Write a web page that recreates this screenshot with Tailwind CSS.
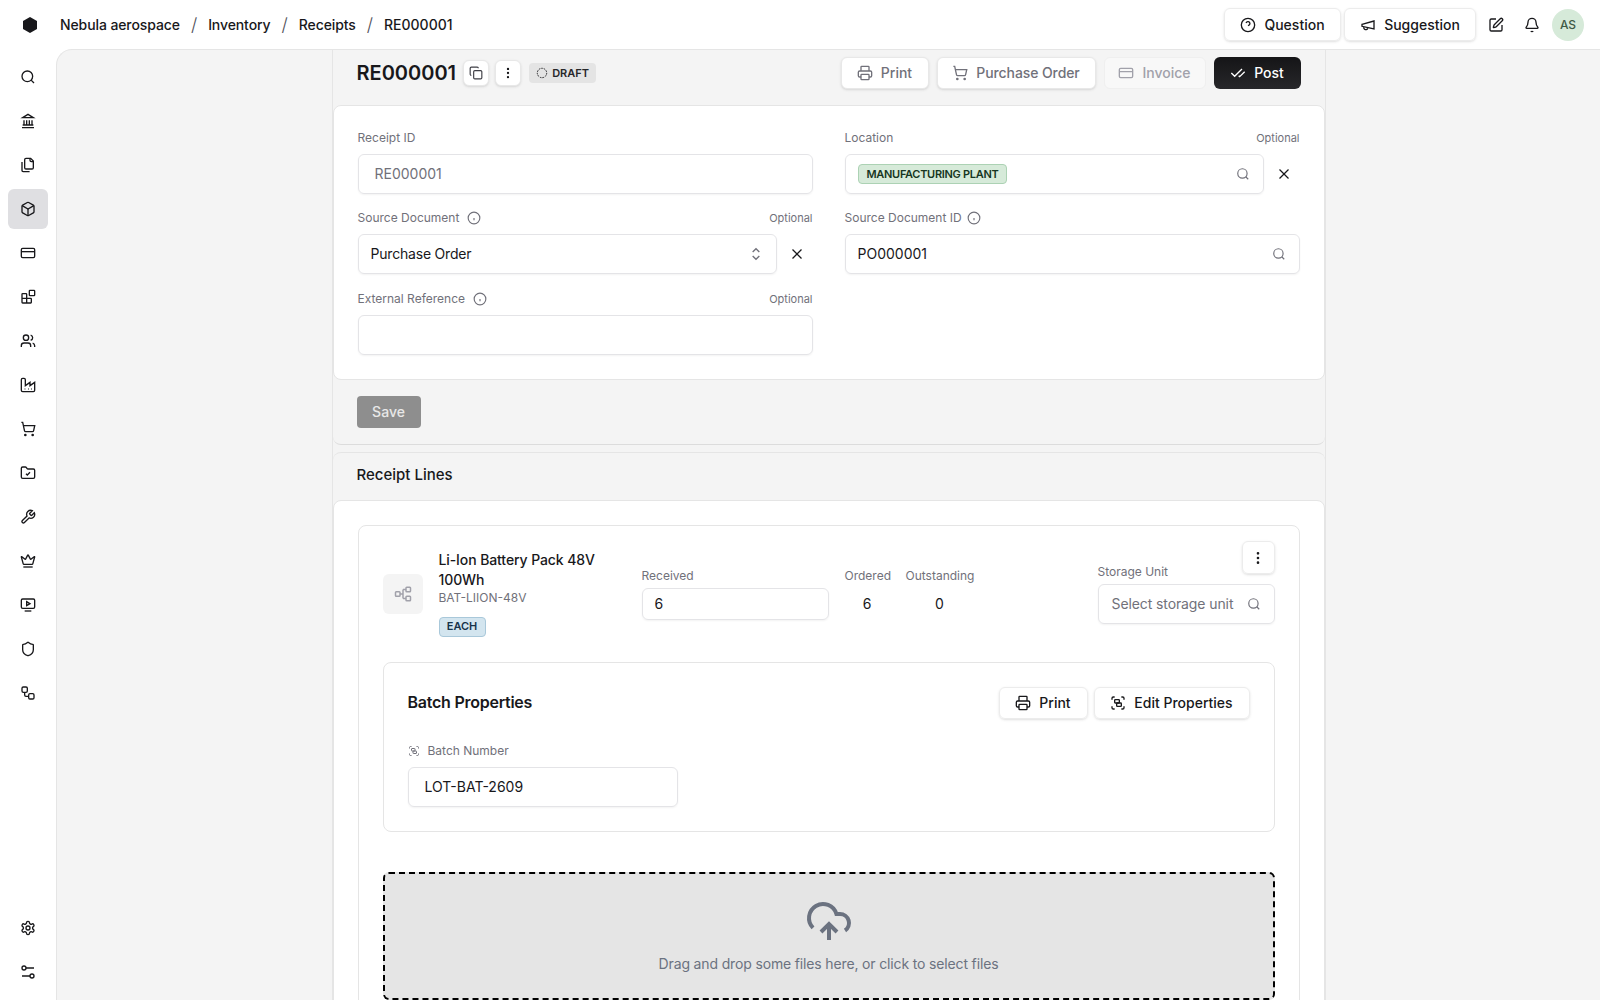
<!DOCTYPE html>
<html lang="en">
<head>
    <meta charset="UTF-8">
    <meta name="viewport" content="width=device-width, initial-scale=1.0">
    <title>RE000001</title>
    <script src="https://cdn.jsdelivr.net/npm/@tailwindcss/browser@4"></script>
</head>
<body class="h-screen overflow-hidden bg-white text-[#18181b] font-['Inter',sans-serif] flex flex-col">

<!-- icon set -->
<svg class="hidden">
    <symbol id="search" viewBox="0 0 24 24"><circle cx="11" cy="11" r="8"/><path d="m21 21-4.3-4.3"/></symbol>
    <symbol id="landmark" viewBox="0 0 24 24"><path d="M3 22h18M6 18v-7M10 18v-7M14 18v-7M18 18v-7M4 18h16"/><polygon points="12 2 20 7 4 7"/></symbol>
    <symbol id="files" viewBox="0 0 24 24"><path d="M20 7h-3a2 2 0 0 1-2-2V2"/><path d="M9 18a2 2 0 0 1-2-2V4a2 2 0 0 1 2-2h7l4 4v10a2 2 0 0 1-2 2Z"/><path d="M3 7.6v12.8A1.6 1.6 0 0 0 4.6 22h9.8"/></symbol>
    <symbol id="box" viewBox="0 0 24 24"><path d="M21 8a2 2 0 0 0-1-1.73l-7-4a2 2 0 0 0-2 0l-7 4A2 2 0 0 0 3 8v8a2 2 0 0 0 1 1.73l7 4a2 2 0 0 0 2 0l7-4A2 2 0 0 0 21 16Z"/><path d="m3.3 7 8.7 5 8.7-5"/><path d="M12 22V12"/></symbol>
    <symbol id="card" viewBox="0 0 24 24"><rect width="20" height="14" x="2" y="5" rx="2"/><path d="M2 10h20"/></symbol>
    <symbol id="blocks" viewBox="0 0 24 24"><rect width="8" height="8" x="14" y="2" rx="1"/><path d="M10 21V8a1 1 0 0 0-1-1H4a1 1 0 0 0-1 1v12a1 1 0 0 0 1 1h12a1 1 0 0 0 1-1v-5a1 1 0 0 0-1-1H3"/></symbol>
    <symbol id="users" viewBox="0 0 24 24"><path d="M16 21v-2a4 4 0 0 0-4-4H6a4 4 0 0 0-4 4v2"/><circle cx="9" cy="7" r="4"/><path d="M22 21v-2a4 4 0 0 0-3-3.87"/><path d="M16 3.13a4 4 0 0 1 0 7.75"/></symbol>
    <symbol id="factory" viewBox="0 0 24 24"><path d="M2 20a2 2 0 0 0 2 2h16a2 2 0 0 0 2-2V8l-7 5V8l-7 5V4a2 2 0 0 0-2-2H4a2 2 0 0 0-2 2Z"/><path d="M17 18h1M12 18h1M7 18h1"/></symbol>
    <symbol id="cart" viewBox="0 0 24 24"><circle cx="8" cy="21" r="1"/><circle cx="19" cy="21" r="1"/><path d="M2.05 2.05h2l2.66 12.42a2 2 0 0 0 2 1.58h9.78a2 2 0 0 0 1.95-1.57l1.65-7.43H5.12"/></symbol>
    <symbol id="folder" viewBox="0 0 24 24"><path d="M20 20a2 2 0 0 0 2-2V8a2 2 0 0 0-2-2h-7.9a2 2 0 0 1-1.69-.9L9.6 3.9A2 2 0 0 0 7.93 3H4a2 2 0 0 0-2 2v13a2 2 0 0 0 2 2Z"/><path d="m9 13 2 2 4-4"/></symbol>
    <symbol id="wrench" viewBox="0 0 24 24"><path d="M14.7 6.3a1 1 0 0 0 0 1.4l1.6 1.6a1 1 0 0 0 1.4 0l3.77-3.77a6 6 0 0 1-7.94 7.94l-6.91 6.91a2.12 2.12 0 0 1-3-3l6.91-6.91a6 6 0 0 1 7.94-7.94l-3.76 3.76z"/></symbol>
    <symbol id="crown" viewBox="0 0 24 24"><path d="M11.562 3.266a.5.5 0 0 1 .876 0L15.39 8.87a1 1 0 0 0 1.516.294L21.183 5.5a.5.5 0 0 1 .798.519l-2.834 10.246a1 1 0 0 1-.956.734H5.81a1 1 0 0 1-.957-.734L2.02 6.02a.5.5 0 0 1 .798-.519l4.276 3.664a1 1 0 0 0 1.516-.294z"/><path d="M5 21h14"/></symbol>
    <symbol id="screen" viewBox="0 0 24 24"><rect width="20" height="14" x="2" y="3" rx="2"/><path d="M7 21h10"/><polygon points="10 7 15 10 10 13"/></symbol>
    <symbol id="shield" viewBox="0 0 24 24"><path d="M20 13c0 5-3.5 7.5-7.66 8.95a1 1 0 0 1-.67-.01C7.5 20.5 4 18 4 13V6a1 1 0 0 1 1-1c2 0 4.5-1.2 6.24-2.72a1.17 1.17 0 0 1 1.52 0C14.51 3.81 17 5 19 5a1 1 0 0 1 1 1z"/></symbol>
    <symbol id="flow" viewBox="0 0 24 24"><rect width="8" height="8" x="3" y="3" rx="2"/><path d="M7 11v4a2 2 0 0 0 2 2h4"/><rect width="8" height="8" x="13" y="13" rx="2"/></symbol>
    <symbol id="settings" viewBox="0 0 24 24"><path d="M12.22 2h-.44a2 2 0 0 0-2 2v.18a2 2 0 0 1-1 1.73l-.43.25a2 2 0 0 1-2 0l-.15-.08a2 2 0 0 0-2.73.73l-.22.38a2 2 0 0 0 .73 2.73l.15.1a2 2 0 0 1 1 1.72v.51a2 2 0 0 1-1 1.74l-.15.09a2 2 0 0 0-.73 2.73l.22.38a2 2 0 0 0 2.73.73l.15-.08a2 2 0 0 1 2 0l.43.25a2 2 0 0 1 1 1.73V20a2 2 0 0 0 2 2h.44a2 2 0 0 0 2-2v-.18a2 2 0 0 1 1-1.73l.43-.25a2 2 0 0 1 2 0l.15.08a2 2 0 0 0 2.73-.73l.22-.39a2 2 0 0 0-.73-2.73l-.15-.08a2 2 0 0 1-1-1.74v-.5a2 2 0 0 1 1-1.74l.15-.09a2 2 0 0 0 .73-2.73l-.22-.38a2 2 0 0 0-2.73-.73l-.15.08a2 2 0 0 1-2 0l-.43-.25a2 2 0 0 1-1-1.73V4a2 2 0 0 0-2-2z"/><circle cx="12" cy="12" r="3"/></symbol>
    <symbol id="sliders" viewBox="0 0 24 24"><circle cx="6" cy="6" r="3"/><path d="M9 6h12M3 18h12"/><circle cx="18" cy="18" r="3"/></symbol>
    <symbol id="question" viewBox="0 0 24 24"><circle cx="12" cy="12" r="10"/><path d="M9.09 9a3 3 0 0 1 5.83 1c0 2-3 3-3 3"/><path d="M12 17h.01"/></symbol>
    <symbol id="megaphone" viewBox="0 0 24 24"><path d="m3 11 18-5v12L3 14v-3z"/><path d="M11.6 16.8a3 3 0 1 1-5.8-1.6"/></symbol>
    <symbol id="edit" viewBox="0 0 24 24"><path d="M12 3H5a2 2 0 0 0-2 2v14a2 2 0 0 0 2 2h14a2 2 0 0 0 2-2v-7"/><path d="M18.375 2.625a1 1 0 0 1 3 3l-9.013 9.014a2 2 0 0 1-.853.505l-2.873.84a.5.5 0 0 1-.62-.62l.84-2.873a2 2 0 0 1 .506-.852z"/></symbol>
    <symbol id="bell" viewBox="0 0 24 24"><path d="M10.268 21a2 2 0 0 0 3.464 0"/><path d="M3.262 15.326A1 1 0 0 0 4 17h16a1 1 0 0 0 .74-1.673C19.41 13.956 18 12.499 18 8A6 6 0 0 0 6 8c0 4.499-1.411 5.956-2.738 7.326"/></symbol>
    <symbol id="copy" viewBox="0 0 24 24"><rect width="14" height="14" x="8" y="8" rx="2"/><path d="M4 16c-1.1 0-2-.9-2-2V4c0-1.1.9-2 2-2h10c1.1 0 2 .9 2 2"/></symbol>
    <symbol id="dots" viewBox="0 0 24 24"><circle cx="12" cy="5" r="1"/><circle cx="12" cy="12" r="1"/><circle cx="12" cy="19" r="1"/></symbol>
    <symbol id="printer" viewBox="0 0 24 24"><path d="M6 18H4a2 2 0 0 1-2-2v-5a2 2 0 0 1 2-2h16a2 2 0 0 1 2 2v5a2 2 0 0 1-2 2h-2"/><path d="M6 9V3a1 1 0 0 1 1-1h10a1 1 0 0 1 1 1v6"/><rect width="12" height="8" x="6" y="14" rx="1"/></symbol>
    <symbol id="checks" viewBox="0 0 24 24"><path d="M18 6 7 17l-5-5"/><path d="m22 10-7.5 7.5L13 16"/></symbol>
    <symbol id="info" viewBox="0 0 24 24"><circle cx="12" cy="12" r="10"/><path d="M12 16v-4"/><path d="M12 8h.01"/></symbol>
    <symbol id="x" viewBox="0 0 24 24"><path d="M18 6 6 18"/><path d="m6 6 12 12"/></symbol>
    <symbol id="updown" viewBox="0 0 24 24"><path d="m7 15 5 5 5-5"/><path d="m7 9 5-5 5 5"/></symbol>
    <symbol id="group" viewBox="0 0 24 24"><path d="M3 7V5c0-1.1.9-2 2-2h2"/><path d="M17 3h2c1.1 0 2 .9 2 2v2"/><path d="M21 17v2c0 1.1-.9 2-2 2h-2"/><path d="M7 21H5c-1.1 0-2-.9-2-2v-2"/><rect width="7" height="5" x="7" y="7" rx="1"/><rect width="7" height="5" x="10" y="12" rx="1"/></symbol>
    <symbol id="network" viewBox="0 0 24 24"><rect width="6" height="6" x="2" y="9" rx="1"/><rect width="6" height="6" x="16" y="3" rx="1"/><rect width="6" height="6" x="16" y="15" rx="1"/><path d="M8 12h4M12 6v12M12 6h4M12 18h4"/></symbol>
    <symbol id="upload" viewBox="0 0 24 24"><path d="M12 13v8"/><path d="M4 14.899A7 7 0 1 1 15.71 8h1.79a4.5 4.5 0 0 1 2.5 8.242"/><path d="m8 17 4-4 4 4"/></symbol>
</svg>

<!-- top bar -->
<header class="h-[49px] shrink-0 flex items-center pl-[22px] pr-4 text-sm">
    <svg class="w-4 h-4 shrink-0 fill-[#18181b]" viewBox="0 0 16 16"><polygon points="8 0 15 4 15 12 8 16 1 12 1 4"/></svg>
    <nav class="ml-[22px] flex items-center font-medium">
        <span class="tracking-[-0.1px]">Nebula aerospace</span>
        <span class="mx-[11px] text-lg leading-5 font-light text-[#52525b]">/</span>
        <span class="tracking-[-0.1px]">Inventory</span>
        <span class="mx-[11px] text-lg leading-5 font-light text-[#52525b]">/</span>
        <span class="tracking-[-0.1px]">Receipts</span>
        <span class="mx-[11px] text-lg leading-5 font-light text-[#52525b]">/</span>
        <span>RE000001</span>
    </nav>
    <div class="ml-auto flex items-center">
        <button class="h-[33px] w-[117px] flex items-center justify-center gap-2 rounded-md border border-[#ececec] shadow-sm font-medium">
            <svg class="w-4 h-4 fill-none stroke-current stroke-2"><use href="#question"/></svg>Question
        </button>
        <button class="ml-[3px] h-[33px] w-[132px] flex items-center justify-center gap-2 rounded-md border border-[#ececec] shadow-sm font-medium">
            <svg class="w-4 h-4 fill-none stroke-current stroke-2"><use href="#megaphone"/></svg>Suggestion
        </button>
        <svg class="ml-3 w-4 h-4 fill-none stroke-current stroke-2"><use href="#edit"/></svg>
        <svg class="ml-5 w-4 h-4 fill-none stroke-current stroke-2"><use href="#bell"/></svg>
        <div class="ml-3 w-8 h-8 rounded-full bg-[#d6ead9] flex items-center justify-center text-xs font-medium text-[#3f5a47]">AS</div>
    </div>
</header>

<div class="flex-1 flex min-h-0">
    <!-- sidebar -->
    <aside class="w-14 shrink-0 flex flex-col items-center gap-1 pt-2 pb-2">
        <a class="w-10 h-10 rounded flex items-center justify-center"><svg class="w-4 h-4 fill-none stroke-current stroke-2"><use href="#search"/></svg></a>
        <a class="w-10 h-10 rounded flex items-center justify-center"><svg class="w-4 h-4 fill-none stroke-current stroke-2"><use href="#landmark"/></svg></a>
        <a class="w-10 h-10 rounded flex items-center justify-center"><svg class="w-4 h-4 fill-none stroke-current stroke-2"><use href="#files"/></svg></a>
        <a class="w-10 h-10 rounded-md bg-[#dfdfe2] flex items-center justify-center"><svg class="w-4 h-4 fill-none stroke-current stroke-2"><use href="#box"/></svg></a>
        <a class="w-10 h-10 rounded flex items-center justify-center"><svg class="w-4 h-4 fill-none stroke-current stroke-2"><use href="#card"/></svg></a>
        <a class="w-10 h-10 rounded flex items-center justify-center"><svg class="w-4 h-4 fill-none stroke-current stroke-2"><use href="#blocks"/></svg></a>
        <a class="w-10 h-10 rounded flex items-center justify-center"><svg class="w-4 h-4 fill-none stroke-current stroke-2"><use href="#users"/></svg></a>
        <a class="w-10 h-10 rounded flex items-center justify-center"><svg class="w-4 h-4 fill-none stroke-current stroke-2"><use href="#factory"/></svg></a>
        <a class="w-10 h-10 rounded flex items-center justify-center"><svg class="w-4 h-4 fill-none stroke-current stroke-2"><use href="#cart"/></svg></a>
        <a class="w-10 h-10 rounded flex items-center justify-center"><svg class="w-4 h-4 fill-none stroke-current stroke-2"><use href="#folder"/></svg></a>
        <a class="w-10 h-10 rounded flex items-center justify-center"><svg class="w-4 h-4 fill-none stroke-current stroke-2"><use href="#wrench"/></svg></a>
        <a class="w-10 h-10 rounded flex items-center justify-center"><svg class="w-4 h-4 fill-none stroke-current stroke-2"><use href="#crown"/></svg></a>
        <a class="w-10 h-10 rounded flex items-center justify-center"><svg class="w-4 h-4 fill-none stroke-current stroke-2"><use href="#screen"/></svg></a>
        <a class="w-10 h-10 rounded flex items-center justify-center"><svg class="w-4 h-4 fill-none stroke-current stroke-2"><use href="#shield"/></svg></a>
        <a class="w-10 h-10 rounded flex items-center justify-center"><svg class="w-4 h-4 fill-none stroke-current stroke-2"><use href="#flow"/></svg></a>
        <a class="mt-auto w-10 h-10 rounded flex items-center justify-center"><svg class="w-4 h-4 fill-none stroke-current stroke-2"><use href="#settings"/></svg></a>
        <a class="w-10 h-10 rounded flex items-center justify-center"><svg class="w-4 h-4 fill-none stroke-current stroke-2"><use href="#sliders"/></svg></a>
    </aside>

    <!-- content -->
    <main class="flex-1 min-w-0 bg-[#f4f4f4] border-l border-t border-[#e5e5e5] rounded-tl-2xl overflow-hidden flex justify-center">
        <div class="w-[994px] shrink-0 border-x border-[#e5e5e5]">
            <!-- title row -->
            <div class="h-[55px] pl-6 pr-6 pb-[9px] flex items-center">
                <h1 class="text-xl font-semibold">RE000001</h1>
                <button class="ml-[7px] w-[26px] h-[26px] bg-white rounded-md border border-[#e8e8e8] shadow-sm flex items-center justify-center">
                    <svg class="w-[14px] h-[14px] fill-none stroke-[#3f3f46] stroke-2"><use href="#copy"/></svg>
                </button>
                <button class="ml-[6px] w-[26px] h-[26px] bg-white rounded-md border border-[#e8e8e8] shadow-sm flex items-center justify-center">
                    <svg class="w-[14px] h-[14px] fill-none stroke-current stroke-2"><use href="#dots"/></svg>
                </button>
                <span class="ml-2 h-[20px] w-[67px] rounded bg-[#e4e4e4] flex items-center justify-center gap-1 text-[11px] font-semibold text-[#27272a]">
                    <svg class="w-3 h-3 fill-none stroke-current stroke-2"><circle cx="6" cy="6" r="4.7" stroke-width="1" stroke-dasharray="1.6 1"/></svg>DRAFT
                </span>
                <div class="ml-auto flex items-center gap-2 text-sm font-medium">
                    <button class="h-8 w-[88px] bg-white rounded-md border border-[#e8e8e8] shadow-sm flex items-center justify-center gap-2 text-[#71717a]">
                        <svg class="w-4 h-4 fill-none stroke-current stroke-2"><use href="#printer"/></svg>Print
                    </button>
                    <button class="h-8 w-[159px] bg-white rounded-md border border-[#e8e8e8] shadow-sm flex items-center justify-center gap-2 text-[#71717a] tracking-[-0.1px]">
                        <svg class="w-4 h-4 fill-none stroke-current stroke-2"><use href="#cart"/></svg>Purchase Order
                    </button>
                    <button class="h-8 w-[102px] bg-[#f8f8f8] rounded-md border border-[#efefef] flex items-center justify-center gap-2 text-[#a1a1aa]">
                        <svg class="w-4 h-4 fill-none stroke-current stroke-2"><use href="#card"/></svg>Invoice
                    </button>
                    <button class="h-8 w-[87px] bg-gradient-to-b from-[#151517] to-[#27272a] rounded-md flex items-center justify-center gap-2 text-white">
                        <svg class="w-4 h-4 fill-none stroke-current stroke-2"><use href="#checks"/></svg>Post
                    </button>
                </div>
            </div>

            <!-- receipt form -->
            <div class="border-b border-[#dcdcdc] rounded-b-lg">
                <div class="bg-white border border-[#e5e5e5] rounded-lg px-6 pt-6 pb-6 grid grid-cols-2 gap-x-8 gap-y-4">
                    <div>
                        <div class="h-4 mb-2 flex items-center text-xs text-[#71717a]">Receipt ID</div>
                        <div class="h-10 rounded-md border border-[#e4e4e7] shadow-xs pl-4 flex items-center text-sm text-[#71717a]">RE000001</div>
                    </div>
                    <div>
                        <div class="h-4 mb-2 flex items-center justify-between text-xs text-[#71717a]"><span>Location</span><span class="text-[11px]">Optional</span></div>
                        <div class="flex items-center">
                            <div class="flex-1 h-10 rounded-md border border-[#e4e4e7] shadow-xs pl-3 pr-[13px] flex items-center justify-between">
                                <span class="h-5 px-2 rounded border border-[#acd2b4] bg-[#d6ead9] flex items-center text-[11px] font-semibold tracking-[-0.3px] text-[#173622]">MANUFACTURING PLANT</span>
                                <svg class="w-[14px] h-[14px] fill-none stroke-[#71717a] stroke-2"><use href="#search"/></svg>
                            </div>
                            <button class="w-9 h-9 pl-1 flex items-center justify-center"><svg class="w-[18px] h-[18px] fill-none stroke-current stroke-[1.7]"><use href="#x"/></svg></button>
                        </div>
                    </div>
                    <div>
                        <div class="h-4 mb-2 flex items-center justify-between text-xs text-[#71717a]">
                            <span class="flex items-center gap-2">Source Document <svg class="w-[14px] h-[14px] fill-none stroke-current stroke-2"><use href="#info"/></svg></span>
                            <span class="text-[11px]">Optional</span>
                        </div>
                        <div class="flex items-center">
                            <div class="flex-1 h-10 rounded-md border border-[#e4e4e7] shadow-xs pl-3 pr-3 flex items-center justify-between text-sm">
                                <span class="tracking-[-0.2px]">Purchase Order</span>
                                <svg class="w-4 h-4 fill-none stroke-[#71717a] stroke-2"><use href="#updown"/></svg>
                            </div>
                            <button class="w-9 h-9 pl-1 flex items-center justify-center"><svg class="w-[18px] h-[18px] fill-none stroke-current stroke-[1.7]"><use href="#x"/></svg></button>
                        </div>
                    </div>
                    <div>
                        <div class="h-4 mb-2 flex items-center gap-[5px] text-xs text-[#71717a]">Source Document ID <svg class="w-[14px] h-[14px] fill-none stroke-current stroke-2"><use href="#info"/></svg></div>
                        <div class="h-10 rounded-md border border-[#e4e4e7] shadow-xs pl-3 pr-[13px] flex items-center justify-between text-sm">
                            <span>PO000001</span>
                            <svg class="w-[14px] h-[14px] fill-none stroke-[#71717a] stroke-2"><use href="#search"/></svg>
                        </div>
                    </div>
                    <div class="mt-px">
                        <div class="h-4 mb-2 flex items-center justify-between text-xs text-[#71717a]">
                            <span class="flex items-center gap-2">External Reference <svg class="w-[14px] h-[14px] fill-none stroke-current stroke-2"><use href="#info"/></svg></span>
                            <span class="text-[11px]">Optional</span>
                        </div>
                        <div class="h-10 rounded-md border border-[#e4e4e7] shadow-xs"></div>
                    </div>
                </div>
                <div class="h-[64px] pl-6 pt-4">
                    <button class="h-8 w-16 rounded bg-[#8e8e8e] text-sm font-medium text-white/80">Save</button>
                </div>
            </div>

            <!-- receipt lines -->
            <div class="mt-[7px] border-t border-[#e5e5e5] rounded-t-lg">
                <div class="h-[47px] pl-6 pb-[3px] flex items-center text-[15px] font-medium">Receipt Lines</div>
                <div class="bg-white border border-[#e5e5e5] rounded-lg p-6 pb-10">
                    <div class="relative border border-[#e5e5e5] rounded-lg p-6">
                        <button class="absolute top-[15px] right-6 w-[33px] h-[33px] rounded-md border border-[#ececec] shadow-sm flex items-center justify-center">
                            <svg class="w-4 h-4 fill-none stroke-current stroke-2"><use href="#dots"/></svg>
                        </button>

                        <div class="h-[88px] flex items-center">
                            <div class="w-10 h-10 rounded-md bg-[#f4f4f4] flex items-center justify-center">
                                <svg class="w-[18px] h-[18px] fill-none stroke-[#a1a1aa] stroke-2"><use href="#network"/></svg>
                            </div>
                            <div class="ml-4 w-[203px] shrink-0 pb-[2px]">
                                <div class="w-[185px] text-sm leading-5 font-medium tracking-[-0.1px]">Li-Ion Battery Pack 48V 100Wh</div>
                                <div class="text-xs leading-4 text-[#71717a]">BAT-LIION-48V</div>
                                <span class="mt-[11px] h-5 w-[47px] rounded border border-[#a9c8da] bg-[#d3e5ef] flex items-center justify-center text-[11px] font-semibold text-[#17324a]">EACH</span>
                            </div>
                            <div class="w-[187px] shrink-0">
                                <div class="h-4 mb-1 text-xs leading-4 text-[#71717a]">Received</div>
                                <div class="h-8 rounded-md border border-[#e4e4e7] shadow-xs pl-3 flex items-center text-sm">6</div>
                            </div>
                            <div class="ml-4 w-[45px] shrink-0 text-center">
                                <div class="h-4 mb-1 text-xs leading-4 text-[#71717a]">Ordered</div>
                                <div class="h-8 flex items-center justify-center text-sm">6</div>
                            </div>
                            <div class="ml-4 w-[68px] shrink-0 text-center">
                                <div class="h-4 mb-1 text-xs leading-4 text-[#71717a]">Outstanding</div>
                                <div class="h-8 flex items-center justify-center text-sm">0</div>
                            </div>
                            <div class="ml-auto w-[177px] shrink-0">
                                <div class="h-4 mb-1 text-xs leading-4 text-[#71717a]">Storage Unit</div>
                                <div class="h-10 rounded-md border border-[#e4e4e7] shadow-xs pl-[13px] pr-[13px] flex items-center justify-between text-sm text-[#71717a] tracking-[-0.1px]">
                                    <span>Select storage unit</span>
                                    <svg class="w-[14px] h-[14px] fill-none stroke-current stroke-2"><use href="#search"/></svg>
                                </div>
                            </div>
                        </div>

                        <div class="mt-6 border border-[#e5e5e5] rounded-lg p-6">
                            <div class="flex items-center justify-between">
                                <h3 class="pb-[2px] text-base font-semibold tracking-[-0.25px]">Batch Properties</h3>
                                <div class="flex gap-[6px] text-sm font-medium">
                                    <button class="h-8 w-[89px] rounded-md border border-[#ececec] shadow-sm flex items-center justify-center gap-2">
                                        <svg class="w-4 h-4 fill-none stroke-current stroke-2"><use href="#printer"/></svg>Print
                                    </button>
                                    <button class="h-8 w-[156px] rounded-md border border-[#ececec] shadow-sm flex items-center justify-center gap-2">
                                        <svg class="w-4 h-4 fill-none stroke-current stroke-2"><use href="#group"/></svg>Edit Properties
                                    </button>
                                </div>
                            </div>
                            <div class="mt-6 h-4 flex items-center gap-2 text-xs text-[#71717a]">
                                <svg class="w-3 h-3 fill-none stroke-current stroke-2"><use href="#group"/></svg>Batch Number
                            </div>
                            <div class="mt-2 w-[270px] h-10 rounded-md border border-[#e4e4e7] shadow-xs pl-4 flex items-center text-sm">LOT-BAT-2609</div>
                        </div>

                        <div class="mt-10 h-[128px] rounded-md border-2 border-dashed border-black bg-[#e5e5e5] flex flex-col items-center pt-6">
                            <svg class="w-12 h-12 fill-none stroke-[#6b7280] stroke-2"><use href="#upload"/></svg>
                            <div class="mt-2 text-sm text-[#6b7280] tracking-[-0.15px]">Drag and drop some files here, or click to select files</div>
                        </div>
                    </div>
                </div>
            </div>
        </div>
    </main>
</div>
</body>
</html>
